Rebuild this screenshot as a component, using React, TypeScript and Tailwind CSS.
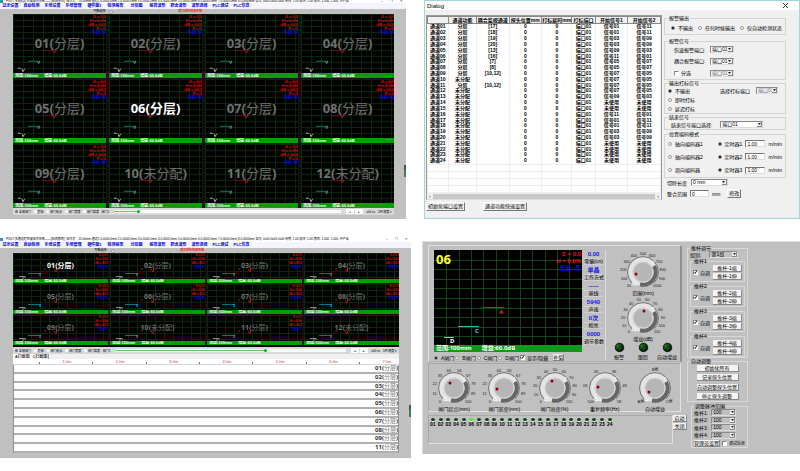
import type { ReactNode } from "react";
import clsx from "clsx";

const sans = "font-['Liberation_Sans','Noto_Sans_CJK_SC',sans-serif]";
const noto = "font-['Noto_Sans','Noto_Sans_CJK_SC',sans-serif]";

const menuItems = [
  "显示设置",
  "自动检测",
  "系统设置",
  "系统管理",
  "硬件图1",
  "检测报告",
  "分层图",
  "报警波形",
  "耦合波形",
  "波形选择",
  "PLC调试",
  "PLC信息",
];

const channels = Array.from({ length: 12 }, (_, i) => ({
  id: String(i + 1).padStart(2, "0"),
  assigned: i !== 9 && i !== 11,
}));

type TileProps = {
  id: string;
  assigned: boolean;
  active: boolean;
  compact?: boolean;
};

function Tile({ id, assigned, active, compact }: TileProps) {
  return (
    <div className="flex min-w-0 flex-col overflow-hidden">
      <div
        className={clsx(
          "relative bg-black bg-[linear-gradient(to_right,#0c260c_1px,transparent_1px),linear-gradient(to_bottom,#0c260c_1px,transparent_1px)]",
          compact
            ? "h-[26px] bg-[size:9px_6px]"
            : "h-[59px] bg-[size:10px_6px]",
        )}
      >
        <svg
          viewBox={compact ? "0 0 95 26" : "0 0 94 59"}
          className="absolute inset-0 h-full w-full"
          fill="none"
        >
          {compact ? (
            <>
              <path d="M31 16h2M41 16l2 3 1-4" stroke="#c01010" />
              <path d="M15 20.500h13" stroke="#157070" />
              <path d="M27 20v3" stroke="#20b0b0" />
              <path d="M6 23.500h6M10 24v2M12 23v2" stroke="#888" />
            </>
          ) : (
            <>
              <path d="M30 36.500h11" stroke="#701010" />
              <path d="M40 36l2 3 1-3" stroke="#d01010" />
              <path d="M15 47.500h12" stroke="#157070" />
              <path d="M25 48l1 2 1-3" stroke="#20a0a0" />
              <path d="M5 54.500h3M9 55l1 3 2-3" stroke="#aaa" />
            </>
          )}
        </svg>
        <span
          className={clsx(
            noto,
            "absolute inset-0 flex items-center justify-center whitespace-nowrap font-bold",
            compact ? "text-[7px]" : "text-[13px]",
            active ? "text-white" : "text-[#707070]",
          )}
        >
          {id}(
          <span className={active ? "font-bold" : "font-normal"}>
            {assigned ? "分层" : "未分配"}
          </span>
          )
        </span>
        {assigned && (
          <div
            className={clsx(
              "absolute top-0 right-0 text-right font-bold text-[#e00000]",
              compact
                ? "text-[3px] leading-[4px]"
                : "pt-px text-[4px] leading-[4px]",
            )}
          >
            <p>S = 0.0</p>
            <p>H = 0.0%</p>
            <p>dB = 60.0</p>
            {!compact && <p>P = 0</p>}
            <p className="text-[#0000f0]">总量: 否</p>
          </div>
        )}
      </div>
      <div
        className={clsx(
          "flex gap-[6px] overflow-hidden whitespace-nowrap bg-[#00a000] pl-[2px] text-[4px] font-bold text-white",
          compact ? "h-[4px] leading-[4px]" : "h-[5px] leading-[5px]",
        )}
      >
        <span>范围:100mm</span>
        <span>增益:60.0dB</span>
      </div>
    </div>
  );
}

function MonitorHeader({ name, tall }: { name: string; tall?: boolean }) {
  return (
    <>
      <header
        className={clsx(
          "flex items-center gap-[3px] overflow-hidden bg-white pr-[3px] text-[3px] whitespace-nowrap text-black",
          tall ? "h-[5px] leading-[5px]" : "h-[3px] leading-[3px]",
        )}
      >
        <span className="h-[3px] w-[3px] bg-[#2a9ab0]" />
        <span className="flex-1 overflow-hidden">
          PXUT-多通道超声波探伤系统——[检测界面]: 操作员 &nbsp;&nbsp; 20.00mm
          通道1 0.0000.0mm 2.0.0000.0mm 3.0.0000.0mm 4.0.0000.0mm 5.0.0000.0mm
          6.0.0000.0mm 7.0.0000.0mm 8.0.0000mm 信号, 0x00 0x00 0x00 周期, 1.00
          模块, 1.00 界面, 1.000, 1.000, 共产品
        </span>
        <span className="flex gap-[7px]">
          <span>–</span>
          <span>❐</span>
          <span>✕</span>
        </span>
      </header>
      <nav className="flex h-[6px] items-center bg-[#f4f4ff] leading-[6px]">
        {menuItems.map((item) => (
          <button
            key={item}
            type="button"
            className="w-[21px] text-center text-[4px] font-bold whitespace-nowrap text-[#0000c8]"
          >
            {item}
          </button>
        ))}
      </nav>
      <div className="flex h-[5px] items-center text-[3px] leading-[5px]">
        <label className="ml-[23%] flex items-center gap-[4px]">
          列数选择
          <input
            type="radio"
            name={`${name}-columns`}
            className="h-[4px] w-[4px] appearance-none rounded-full border border-gray-400 bg-gray-200"
          />
        </label>
        <span className="ml-[16%] font-bold text-[#f02020]">
          超声探伤检测系统
        </span>
      </div>
    </>
  );
}

function MonitorToolbar({ name, value }: { name: string; value: number }) {
  const gates = ["全部闸门", "超级", "闸门起点", "闸门宽度", "闸门高度"];
  return (
    <div className="flex h-[7px] items-center bg-[#d8d8d8] px-[2px] text-[3px] leading-[4px] whitespace-nowrap text-black">
      <div className="flex w-[25%] shrink-0 items-center justify-between">
        {gates.map((gate, i) => (
          <label key={gate} className="flex items-center gap-px">
            <input
              type="radio"
              name={`${name}-gate`}
              defaultChecked={i === 0}
              className="h-[3px] w-[3px] appearance-none rounded-full bg-white checked:bg-gray-500"
            />
            {gate}
          </label>
        ))}
        <button type="button">闸门1</button>
      </div>
      <input
        type="range"
        aria-label="进度"
        defaultValue={value}
        className="mx-[5px] h-[3px] min-w-0 flex-1 appearance-none border-y border-white [&::-webkit-slider-thumb]:h-[3px] [&::-webkit-slider-thumb]:w-[3px] [&::-webkit-slider-thumb]:appearance-none [&::-webkit-slider-thumb]:rounded-full [&::-webkit-slider-thumb]:bg-[#00b020]"
        style={{
          background: `linear-gradient(to right, #60c860 ${value}%, #f4f4f4 ${value}%)`,
        }}
      />
      <div className="flex items-center gap-px">
        <button type="button" className="h-[5px] w-[8px] bg-white">
          ◂
        </button>
        <button type="button" className="h-[5px] w-[8px] bg-white">
          ▸
        </button>
        <span className="px-[2px]">x00 ns</span>
        <span>DPI速度 ▾</span>
      </div>
    </div>
  );
}

function EdgeHandle({ className }: { className: string }) {
  return (
    <span
      className={clsx(
        "absolute right-0 h-[12px] w-[2px] border-t-4 border-[#505050] bg-[#408050]",
        className,
      )}
    />
  );
}

function LargeMonitor() {
  return (
    <section className="relative mr-[5px] bg-[#c0c0c0]">
      <MonitorHeader name="large" />
      <div className="pr-[12px] pb-[4px] pl-[13px]">
        <div className="grid grid-cols-4 gap-x-[3px] gap-y-px bg-[#101010]">
          {channels.map((channel) => (
            <Tile key={channel.id} {...channel} active={channel.id === "06"} />
          ))}
        </div>
        <MonitorToolbar name="large" value={10} />
      </div>
      <EdgeHandle className="top-[165px]" />
    </section>
  );
}

const ruler = ["1.0m", "2.0m", "3.0m", "4.0m", "5.0m", "6.0m", "7.0m"];
const traces = ["01", "02", "03", "04", "05", "06", "07", "08", "09", "11"];

function SmallMonitor() {
  return (
    <section className="relative bg-[#c0c0c0]">
      <MonitorHeader name="small" tall />
      <div className="pr-[12px] pb-[5px] pl-[13px]">
        <div className="grid grid-cols-4 gap-x-[2px] gap-y-px border-b-2 border-black bg-[#101010]">
          {channels.map((channel) => (
            <Tile
              key={channel.id}
              {...channel}
              active={channel.id === "01"}
              compact
            />
          ))}
        </div>
        <MonitorToolbar name="small" value={65} />
        <div className="flex h-[5px] gap-px bg-[#f0f0f0] text-[4px] leading-[5px]">
          <button type="button" className="bg-white px-[2px]">
            A扫截图
          </button>
          <button type="button" className="border-r border-gray-400">
            C扫截图
          </button>
        </div>
        <div className="flex h-[6px] border-b border-gray-300 bg-white pl-[5px] text-[4px] leading-[5px] text-[#d04040]">
          {ruler.map((mark) => (
            <span
              key={mark}
              className="w-[14%] bg-[linear-gradient(#777,#777)] bg-[size:1px_2px] bg-[position:40%_100%] bg-no-repeat text-right"
            >
              {mark}
            </span>
          ))}
        </div>
        <div
          className={clsx(
            noto,
            "flex h-[88px] flex-col border-x border-[#909090] text-[6px] leading-[7px] font-bold text-[#333]",
          )}
        >
          {traces.map((trace) => (
            <div
              key={trace}
              className="flex-1 overflow-hidden border-b-2 border-[#b0b0b0] bg-white text-right"
            >
              {trace}(<span className="font-normal text-[#777]">分层</span>)
            </div>
          ))}
        </div>
      </div>
      <EdgeHandle className="top-[168px]" />
    </section>
  );
}

const columns = [
  "",
  "通道功能",
  "耦合监视通道",
  "探头位置mm",
  "打标延时mm",
  "打标端口",
  "开始信号1",
  "开始信号2",
];

// function, monitored channel, start signal 1, start signal 2
const channelRows: [string, string, string, string][] = [
  ["分层", "[17]", "信号01", "信号11"],
  ["分层", "[18]", "信号01", "信号11"],
  ["分层", "[19]", "信号03", "信号09"],
  ["分层", "[20]", "信号03", "信号09"],
  ["分层", "[13]", "信号09", "信号03"],
  ["分层", "[16]", "信号11", "信号01"],
  ["分层", "[7]", "信号05", "信号07"],
  ["分层", "[8]", "信号05", "信号07"],
  ["分层", "[10,12]", "信号07", "信号05"],
  ["未分配", "", "信号07", "信号05"],
  ["分层", "[10,12]", "信号07", "信号05"],
  ["未分配", "", "信号07", "信号05"],
  ["未分配", "", "信号09", "信号03"],
  ["未分配", "", "未使用", "未使用"],
  ["未分配", "", "未使用", "未使用"],
  ["未分配", "", "信号11", "信号01"],
  ["未分配", "", "信号01", "信号11"],
  ["未分配", "", "信号01", "信号11"],
  ["未分配", "", "信号03", "信号09"],
  ["未分配", "", "信号03", "信号09"],
  ["未分配", "", "未使用", "未使用"],
  ["未分配", "", "未使用", "未使用"],
  ["未分配", "", "未使用", "未使用"],
  ["未分配", "", "未使用", "未使用"],
];

function ChannelTable() {
  return (
    <table className="h-[177px] w-full table-fixed border-collapse text-center text-[5px] leading-[5px] font-bold whitespace-nowrap text-black">
      <colgroup>
        <col className="w-[9%]" />
        <col className="w-[12%]" />
        <col className="w-[14%]" />
        <col className="w-[14%]" />
        <col className="w-[13%]" />
        <col className="w-[10%]" />
        <col className="w-[14%]" />
        <col className="w-[14%]" />
      </colgroup>
      <thead>
        <tr className="bg-[#f0f0f0]">
          {columns.map((column) => (
            <th key={column} className="h-[7px] border border-[#888] p-0">
              {column}
            </th>
          ))}
        </tr>
      </thead>
      <tbody>
        {channelRows.map(([kind, monitored, start1, start2], i) => (
          <tr key={i}>
            {[
              `通道${String(i + 1).padStart(2, "0")}`,
              kind,
              monitored,
              "0",
              "0",
              "端口01",
              start1,
              start2,
            ].map((cell, j) => (
              <td key={j} className="border-r border-[#eee] p-0">
                {cell}
              </td>
            ))}
          </tr>
        ))}
        {[0, 1, 2, 3].map((row) => (
          <tr key={row}>
            {columns.map((column) => (
              <td key={column} className="border border-[#eee] p-0">
                &nbsp;
              </td>
            ))}
          </tr>
        ))}
      </tbody>
    </table>
  );
}

type GroupProps = {
  title: string;
  className?: string;
  dark?: boolean;
  children: ReactNode;
};

function Group({ title, className, dark, children }: GroupProps) {
  return (
    <fieldset
      className={clsx(
        "min-w-0 border",
        dark ? "border-[#d8d8d8] px-[2px]" : "border-[#d4d4d4] px-[3px]",
      )}
    >
      <legend className="px-px leading-[6px]">{title}</legend>
      <div className={className}>{children}</div>
    </fieldset>
  );
}

type RadioProps = {
  name: string;
  label: string;
  checked?: boolean;
};

function Radio({ name, label, checked }: RadioProps) {
  return (
    <label className="flex items-center gap-[3px] whitespace-nowrap">
      <input
        type="radio"
        name={name}
        defaultChecked={checked}
        className="h-[4px] w-[4px] shrink-0 appearance-none rounded-full border border-[#999] bg-white checked:bg-black"
      />
      {label}
    </label>
  );
}

function Check({ label, checked }: { label: string; checked?: boolean }) {
  return (
    <label className="flex items-center gap-[2px] whitespace-nowrap">
      <span className="relative flex">
        <input
          type="checkbox"
          defaultChecked={checked}
          className="peer h-[5px] w-[5px] shrink-0 appearance-none border border-t-[#888] border-r-white border-b-white border-l-[#888] bg-white"
        />
        <svg
          viewBox="0 0 5 5"
          className="pointer-events-none invisible absolute inset-0 peer-checked:visible"
          fill="none"
          stroke="#111"
        >
          <path d="M1 2.500l1 1 2-3" />
        </svg>
      </span>
      {label}
    </label>
  );
}

type PickerProps = {
  value: string;
  label: string;
  className: string;
  disabled?: boolean;
  dark?: boolean;
};

function Picker({ value, label, className, disabled, dark }: PickerProps) {
  return (
    <span className={clsx("relative inline-flex", className)}>
      <select
        aria-label={label}
        disabled={disabled}
        className={clsx(
          "h-[7px] w-full appearance-none border border-t-[#888] border-r-[#ddd] border-b-[#ddd] border-l-[#888] pl-px text-[5px] leading-[5px] text-black disabled:bg-[#f0f0f0] disabled:text-gray-500",
          dark ? "bg-[#c0c0c0]" : "bg-white",
        )}
      >
        <option>{value}</option>
      </select>
      <span className="pointer-events-none absolute inset-y-px right-px flex w-[5px] items-center justify-center border-r border-b border-[#888] bg-[#eee]">
        <svg viewBox="0 0 3 2" className="h-[2px] w-[3px]">
          <path d="M0 0h3L1.500 2z" fill="#222" />
        </svg>
      </span>
    </span>
  );
}

function Speed({ index }: { index: number }) {
  return (
    <div className="flex items-center gap-[3px]">
      <Radio name={`timer-${index}`} label={`定时器${index}`} checked />
      <input
        aria-label={`定时器${index} 速度`}
        defaultValue="1.00"
        className="h-[7px] w-[20px] border border-t-[#777] border-r-[#ddd] border-b-[#ddd] border-l-[#777] bg-white pl-px"
      />
      <span>m/min</span>
    </div>
  );
}

function DialogButton({ children }: { children: ReactNode }) {
  return (
    <button
      type="button"
      className="h-[9px] border border-t-white border-r-[#777] border-b-[#777] border-l-white bg-[#f0f0f0] px-px leading-[7px] whitespace-nowrap"
    >
      {children}
    </button>
  );
}

function SettingsDialog() {
  return (
    <section className="ml-[2px] flex h-[219px] flex-col border border-[#9cd8dc] bg-[#f0f0f0] text-[5px] leading-[6px] text-black">
      <header className="flex h-[9px] items-center justify-between bg-white pr-[11px] pl-[2px]">
        <h2 className="text-[6px]">Dialog</h2>
        <button type="button" aria-label="关闭">
          <svg viewBox="0 0 5 5" className="h-[5px] w-[5px]" stroke="#333">
            <path d="M0 0l5 5M5 0L0 5" />
          </svg>
        </button>
      </header>
      <div className="grid flex-1 grid-cols-[246fr_113fr] gap-x-[2px] pr-[13px] pl-px">
        <div className="pt-[5px]">
          <div className="border border-[#999] border-b-[#ddd] bg-white">
            <ChannelTable />
            <div className="flex h-[6px] items-center justify-between bg-[#f0f0f0] px-[2px] text-[#444]">
              <span>‹</span>
              <span className="mx-[2px] h-[5px] flex-1 bg-[#c8c8c8]" />
              <span>›</span>
            </div>
          </div>
          <div className="mt-[2px] flex gap-[18px]">
            <DialogButton>初始化端口设置</DialogButton>
            <DialogButton>通道功能快速设置</DialogButton>
          </div>
        </div>
        <div className="flex flex-col pt-[5px]">
          <Group
            title="报警输出"
            className="flex h-[13px] items-center gap-[5px] pl-[3px]"
          >
            <Radio name="alarm-output" label="不输出" checked />
            <Radio name="alarm-output" label="任何时候输出" />
            <Radio name="alarm-output" label="仅自动检测状态" />
          </Group>
          <div className="mt-[3px]">
            <Group
              title="报警信号"
              className="grid h-[35px] grid-cols-[36px_1fr] items-center pl-[6px]"
            >
              <span>伤波报警端口:</span>
              <Picker label="伤波报警端口" value="端口01" className="w-[24px]" />
              <span>耦合报警端口:</span>
              <Picker label="耦合报警端口" value="端口01" className="w-[24px]" />
              <Check label="分选" />
              <Picker
                label="分选端口"
                value="端口01"
                className="w-[24px]"
                disabled
              />
            </Group>
          </div>
          <Group
            title="输出打标信号"
            className="flex h-[27px] flex-col justify-around"
          >
            <div className="flex items-center justify-between">
              <Radio name="mark-output" label="不输出" checked />
              <span className="flex items-center gap-[6px] pr-[4px]">
                选择打标端口
                <Picker
                  label="选择打标端口"
                  value="端口01"
                  className="w-[22px]"
                  disabled
                />
              </span>
            </div>
            <Radio name="mark-output" label="即时打标" />
            <Radio name="mark-output" label="延迟打标" />
          </Group>
          <Group
            title="结束信号"
            className="flex h-[9px] items-center gap-[8px] pl-[3px]"
          >
            <span>结束信号端口选择:</span>
            <Picker label="结束信号端口选择" value="端口01" className="w-[43px]" />
          </Group>
          <div className="mt-px">
            <Group
              title="位置编码模式"
              className="flex h-[40px] flex-col justify-around"
            >
              {["轴向编码器1", "轴向编码器2", "周向编码器"].map((label, i) => (
                <div key={label} className="flex items-center justify-between">
                  <Radio name="encoder" label={label} />
                  <Speed index={i + 1} />
                </div>
              ))}
            </Group>
          </div>
          <div className="mt-px flex items-center gap-[4px] pl-[3px]">
            切除长度
            <Picker label="切除长度" value="0 mm" className="w-[37px]" />
          </div>
          <div className="mt-[3px] flex items-center gap-[3px] pl-[3px]">
            <label htmlFor="merge-range">整合范围</label>
            <input
              id="merge-range"
              defaultValue="0"
              className="h-[7px] w-[19px] border border-t-[#777] border-r-[#ddd] border-b-[#ddd] border-l-[#777] bg-white pl-px"
            />
            mm
            <span className="ml-[4px]">
              <DialogButton>修改</DialogButton>
            </span>
          </div>
        </div>
      </div>
    </section>
  );
}

type KnobProps = {
  caption: string;
  labels: string[];
  dot: [number, number];
};

function Knob({ caption, labels, dot }: KnobProps) {
  const step = 270 / (labels.length - 1);
  return (
    <div className="flex flex-col items-center">
      <svg
        viewBox="-26 -22 52 41"
        className="h-[41px] w-[52px] overflow-visible"
        fill="none"
      >
        <path d="M-11 11A15.500 15.500 0 1 1 11 11" stroke="#777" />
        <circle r="12.500" stroke="#e4e4e4" strokeWidth="4" />
        <path d="M11 -6A12.500 12.500 0 0 1 -3 12.200" stroke="#666" strokeWidth="4" />
        <path d="M9 -9l2.500 -2M-9 9l-2 3 4 1z" stroke="#f8f8f8" />
        <circle r="10" fill="#b6b6b6" stroke="#d8d8d8" />
        <circle cx={dot[0]} cy={dot[1]} r="1.500" fill="#900010" />
        {labels.map((label, i) => {
          const angle = ((-135 + i * step) * Math.PI) / 180;
          return (
            <text
              key={label}
              x={Math.sin(angle) * 20}
              y={2 - Math.cos(angle) * 19}
              fill="#222"
              textAnchor="middle"
              className="text-[4px]"
            >
              {label}
            </text>
          );
        })}
      </svg>
      <span className="leading-[5px]">{caption}</span>
    </div>
  );
}

const tens = ["0", "10", "20", "30", "40", "50", "60", "70", "80", "90", "100"];
const elevenths = ["0", "11", "22", "33", "44", "56", "67", "78", "89", "100"];

const rangeLabels = [
  "10",
  "100",
  "200",
  "300",
  "400",
  "500",
  "600",
  "700",
  "800",
  "900",
  "1000",
];

const gateKnobs: KnobProps[] = [
  { caption: "闸门起点(mm)", labels: elevenths, dot: [-4, -5] },
  { caption: "闸门宽度(mm)", labels: elevenths, dot: [-7, 1] },
  { caption: "闸门高度(%)", labels: tens, dot: [-3, -7] },
  {
    caption: "重复频率(Hz)",
    labels: ["500", "1K", "2K", "3K", "4K", "5K"],
    dot: [-7, -1],
  },
  { caption: "自动增益", labels: ["A闸", "B闸", "C闸"], dot: [-6, 4] },
];

const readings = [
  ["0.00", "零偏(us)"],
  ["单晶", "工作方式"],
  ["-----", "基线"],
  ["5940", "声速"],
  ["0次", "相关"],
  ["0000", "调节参数"],
];

function Scope() {
  return (
    <div className={clsx(noto, "relative overflow-hidden bg-black font-bold")}>
      <svg viewBox="0 0 148 95" className="block w-full" fill="none">
        <g stroke="#14441a">
          {Array.from({ length: 11 }, (_, i) => (
            <path key={i} d={`M${Math.round((i + 1) * 12.3)}.5 0V95`} />
          ))}
          {Array.from({ length: 9 }, (_, i) => (
            <path key={i} d={`M0 ${Math.round((i + 1) * 9.6)}.5H148`} />
          ))}
        </g>
        <path d="M49 57.500h21" stroke="#d01818" />
        <path d="M24 76.500h21" stroke="#30b8b8" />
        <path d="M10 87.500h10" stroke="#b0b0b0" />
        <g className="text-[6px]">
          <text x="65" y="64" fill="#f02020">
            A
          </text>
          <text x="41" y="83" fill="#30e0e0">
            C
          </text>
          <text x="16" y="93" fill="#fff">
            D
          </text>
        </g>
      </svg>
      <span className="absolute top-[2px] left-[2px] text-[13px] leading-[14px] text-[#ffff20]">
        06
      </span>
      <div className="absolute top-px right-px font-['Liberation_Sans','Noto_Sans_CJK_SC',sans-serif] text-right text-[6px] leading-[7px] text-[#f01010]">
        <p>S = 0.0</p>
        <p>H = 0.0%</p>
        <p className="text-[#1010d0]">总量: 否</p>
      </div>
      <div className="flex h-[7px] gap-[10px] bg-[#109818] pl-[2px] text-[6px] leading-[7px] text-white">
        <span>范围:100mm</span>
        <span>增益:60.0dB</span>
      </div>
    </div>
  );
}

function Lamp({ label }: { label: string }) {
  return (
    <div className="flex w-[24px] flex-col items-center gap-[2px]">
      <svg viewBox="0 0 12 12" className="h-[11px] w-[11px]">
        <circle cx="6" cy="6" r="5.500" fill="#0c240c" stroke="#eee" strokeWidth="0.500" />
        <circle cx="5" cy="5" r="3.500" fill="#164a16" />
        <circle cx="4" cy="4" r="1" fill="#408040" />
      </svg>
      <span className="leading-[5px] whitespace-nowrap">{label}</span>
    </div>
  );
}

function PanelButton({
  children,
  className,
}: {
  children: ReactNode;
  className?: string;
}) {
  return (
    <button
      type="button"
      className={clsx(
        "h-[7px] border-r border-b border-[#888] bg-[#f4f4f4] leading-[6px] whitespace-nowrap",
        className,
      )}
    >
      {children}
    </button>
  );
}

const inset = "border border-[#a8a8a8] border-r-[#e0e0e0] border-b-[#e0e0e0]";

function InstrumentPanel() {
  return (
    <section className="grid h-[213px] grid-cols-[259fr_61fr_52fr] border-t border-l border-[#ddd] bg-[#c0c0c0] pt-[3px] pl-[5px] text-[5px] leading-[6px] text-black">
      <div className="min-w-0">
        <div
          className={clsx(
            "mr-[5px] grid h-[117px] grid-cols-[148fr_19fr_75fr] gap-x-[2px] border-t border-r-2 border-b border-l pt-[4px] pl-[5px]",
            "border-t-[#e0e0e0] border-r-[#909090] border-b-[#b0b0b0] border-l-[#e0e0e0]",
          )}
        >
          <div className="min-w-0">
            <Scope />
            <div className="mt-[2px] flex items-center gap-px">
              {["A闸门", "B闸门", "C闸门", "D闸门"].map((gate, i) => (
                <Radio key={gate} name="gate" label={gate} checked={i === 0} />
              ))}
              <Check label="显示/隐藏" checked />
              <PanelButton className="ml-[4px] w-[11px]">补偿</PanelButton>
            </div>
          </div>
          <dl className="flex min-w-0 flex-col text-center whitespace-nowrap">
            {readings.map(([value, label]) => (
              <div key={label} className="h-[16px]">
                <dt className="h-[8px] text-[6px] leading-[8px] font-bold text-[#1818e8]">
                  {value}
                </dt>
                <dd className="h-[7px] border-y border-[#d0d0d0] leading-[5px]">
                  {label}
                </dd>
              </div>
            ))}
          </dl>
          <div className="min-w-0 border-l border-[#ddd]">
            <Knob caption="范围(mm)" labels={rangeLabels} dot={[-7, 2]} />
            <Knob caption="增益(dB)" labels={[...tens, "110"]} dot={[1, -7]} />
            <div className="flex justify-center">
              <Lamp label="报警" />
              <Lamp label="跟踪" />
              <Lamp label="自动增益" />
            </div>
          </div>
        </div>
        <div
          className={clsx(
            inset,
            "mt-px mr-[6px] grid h-[49px] grid-cols-5 pt-[2px]",
          )}
        >
          {gateKnobs.map((knob) => (
            <Knob key={knob.caption} {...knob} />
          ))}
        </div>
        <div className="mt-[3px] flex">
          <div className={clsx(inset, "h-[29px] flex-1 pt-[2px]")}>
            <ol className="flex w-[76%]">
              {Array.from({ length: 24 }, (_, i) => (
                <li key={i} className="flex flex-1 flex-col items-center">
                  <span
                    className={clsx(
                      "h-[4px] w-[4px] rounded-full border-b border-gray-100",
                      i === 5 ? "bg-[#40f020]" : "bg-[#104010]",
                    )}
                  />
                  <span className="font-bold leading-[5px]">
                    {String(i + 1).padStart(2, "0")}
                  </span>
                </li>
              ))}
            </ol>
          </div>
          <div className="flex flex-col gap-px">
            <PanelButton className="w-[14px]">启动</PanelButton>
            <PanelButton className="w-[14px]">关闭</PanelButton>
          </div>
        </div>
      </div>
      <div className="flex min-w-0 flex-col">
        <Group title="推杆调节" dark>
          <div className="flex items-center gap-[8px]">
            组别:
            <Picker label="组别" value="第1组" className="w-[29px]" dark />
          </div>
          {[1, 2, 3, 4].map((rod) => (
            <div key={rod} className={rod === 1 ? undefined : "mt-px"}>
              <Group
                title={`推杆${rod}`}
                className="flex h-[17px] items-center justify-between"
                dark
              >
                <Check label="自调" checked />
                <div className="flex flex-col gap-px">
                  <PanelButton className="w-[29px]">推杆-{rod}缩</PanelButton>
                  <PanelButton className="w-[29px]">推杆-{rod}伸</PanelButton>
                </div>
              </Group>
            </div>
          ))}
        </Group>
        <Group
          title="自动调整"
          className="flex h-[37px] flex-col items-center justify-around"
          dark
        >
          {["初始化所有", "记录探头位置", "自动调整探头位置", "停止探头调整"].map(
            (label) => (
              <PanelButton key={label} className="w-[42px]">
                {label}
              </PanelButton>
            ),
          )}
        </Group>
        <div className="mt-px ml-[4px]">
          <Group title="调整脉冲范围" dark>
            <div className="flex h-[30px] flex-col justify-around">
              {[1, 2, 3, 4].map((rod) => (
                <div key={rod} className="flex items-center gap-[3px]">
                  <span>推杆{rod}:</span>
                  <Picker
                    label={`推杆${rod}`}
                    value="100"
                    className="w-[25px]"
                    dark
                  />
                </div>
              ))}
            </div>
            <div className="mt-px flex items-center gap-[2px]">
              <PanelButton className="w-[26px]">管理员设置</PanelButton>
              <span className="text-[4px]">
                <Check label="调试信息" />
              </span>
            </div>
          </Group>
        </div>
      </div>
    </section>
  );
}

export default function App() {
  return (
    <main
      className={clsx(
        sans,
        "grid grid-cols-[411fr_378fr] items-start gap-x-[11px] overflow-hidden bg-white pb-[12px]",
      )}
    >
      <div className="flex min-w-0 flex-col gap-[18px]">
        <LargeMonitor />
        <SmallMonitor />
      </div>
      <div className="flex min-w-0 flex-col gap-[22px]">
        <SettingsDialog />
        <InstrumentPanel />
      </div>
    </main>
  );
}
